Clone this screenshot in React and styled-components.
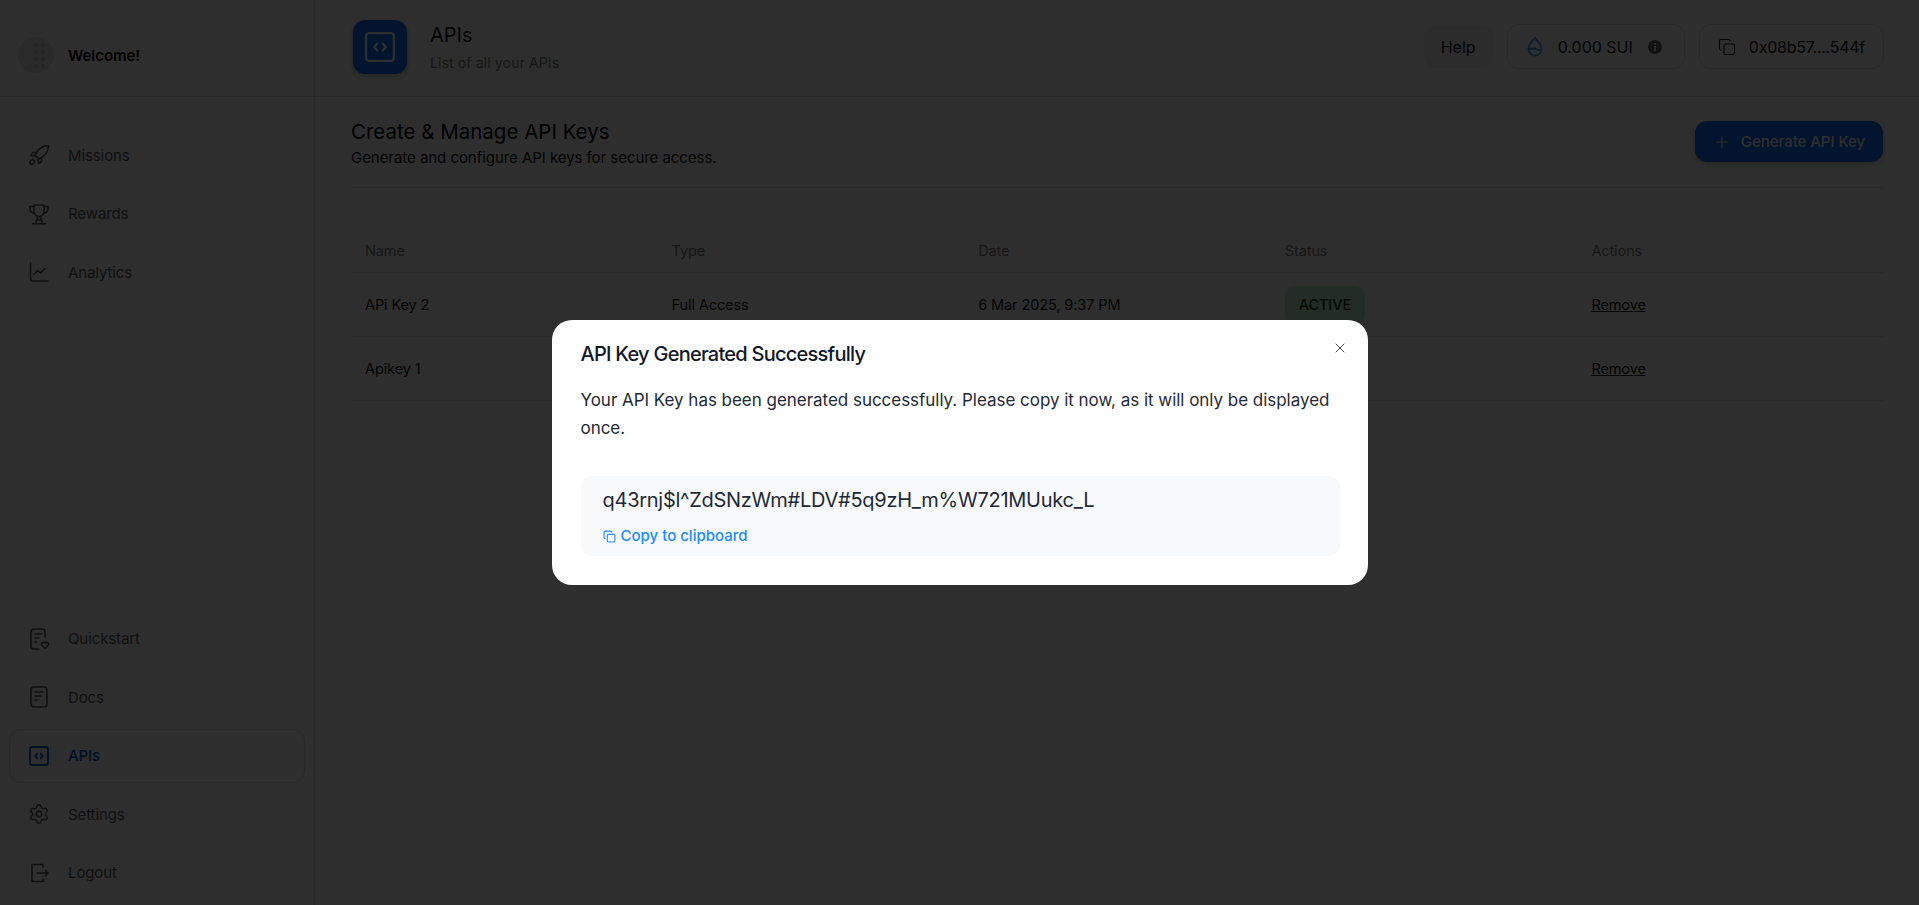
import styled, { createGlobalStyle } from 'styled-components';
import { Settings, Plus, Copy, X } from 'lucide-react';

const GlobalStyle = createGlobalStyle`
  * { box-sizing: border-box; }
  html, body { margin: 0; height: 100%; }
  body {
    background: #fff;
    color: #1a1a1a;
    font-family: Inter, "Noto Sans", "Liberation Sans", sans-serif;
    overflow: hidden;
  }
`;

const Shell = styled.div`
  display: flex;
  height: 905px;
`;

const Sidebar = styled.aside`
  width: 315px;
  flex-shrink: 0;
  display: flex;
  flex-direction: column;
  border-right: 1px solid #dcdcdc;
`;

const Brand = styled.div`
  height: 97px;
  padding: 14px 18px 0;
  display: flex;
  align-items: center;
  gap: 14px;
  border-bottom: 1px solid #dcdcdc;
  font-size: 15px;
  font-weight: 600;
  color: #000;
  letter-spacing: -0.05px;
`;

const Nav = styled.nav`
  flex: 1;
  display: flex;
  flex-direction: column;
  justify-content: space-between;
  padding: 31px 9px 5px;
`;

const NavGroup = styled.div`
  display: flex;
  flex-direction: column;
  gap: 4px;
`;

const NavItem = styled.a`
  height: 54.5px;
  padding: 0 18px;
  display: flex;
  align-items: center;
  gap: 18px;
  font-size: 15px;
  letter-spacing: -0.1px;
  border-radius: 12px;
  border: 1px solid ${({ $active }) => ($active ? '#dcdcdc' : 'transparent')};
  color: ${({ $active }) => ($active ? '#0052cc' : '#5a5a5a')};
  font-weight: ${({ $active }) => ($active ? 500 : 400)};
  svg { flex-shrink: 0; width: 22px; height: 22px; }
`;

const Main = styled.main`
  flex: 1;
  min-width: 0;
  display: flex;
  flex-direction: column;
`;

const TopBar = styled.header`
  height: 97px;
  padding: 0 35px 3px 38px;
  display: flex;
  align-items: center;
  border-bottom: 1px solid #dcdcdc;
`;

const PageIcon = styled.div`
  width: 54px;
  height: 54px;
  border-radius: 12px;
  background: #0d6efd;
  box-shadow: 0 2px 6px rgba(0, 0, 0, 0.25);
  color: #fff;
  display: grid;
  place-items: center;
  margin-right: 23px;
`;

const PageTitle = styled.div`
  flex: 1;
  margin-top: 3px;
  h1 {
    margin: 0 0 6px;
    font-size: 20px;
    line-height: 24px;
    font-weight: 400;
    color: #1a1a1a;
  }
  p {
    margin: 0;
    font-size: 14.3px;
    line-height: 20px;
    color: #808080;
  }
`;

const TopActions = styled.div`
  display: flex;
  align-items: center;
  gap: 14px;
`;

const HelpButton = styled.button`
  height: 42px;
  width: 69px;
  border: 0;
  border-radius: 12px;
  background: #f2f2f2;
  font: inherit;
  font-size: 16px;
  color: #1a1a1a;
`;

const Chip = styled.div`
  height: 45px;
  padding: 0 22px 0 19px;
  border: 1px solid #dcdcdc;
  border-radius: 12px;
  display: flex;
  align-items: center;
  gap: 15px;
  font-size: 16px;
  color: #1a1a1a;
`;

const WalletChip = styled(Chip)`
  padding: 0 18px;
  gap: 13px;
  letter-spacing: -0.25px;
`;

const Content = styled.section`
  padding: 23px 35px 0 36px;
`;

const SectionHead = styled.div`
  height: 68px;
  display: flex;
  justify-content: space-between;
  align-items: flex-start;
  border-bottom: 1px solid #e0e0e0;
  h2 {
    margin: 0;
    font-size: 20.5px;
    line-height: 24px;
    font-weight: 400;
    color: #000;
  }
  p {
    margin: 3px 0 0;
    font-size: 15px;
    line-height: 22px;
    letter-spacing: -0.05px;
    color: #111;
  }
`;

const PrimaryButton = styled.button`
  width: 188px;
  height: 41px;
  margin: 1px 1px 0 0;
  border: 0;
  border-radius: 12px;
  background: #0d6efd;
  box-shadow: 0 2px 6px rgba(0, 0, 0, 0.2);
  color: #fff;
  font: inherit;
  font-size: 15px;
  font-weight: 500;
  letter-spacing: -0.05px;
  display: flex;
  align-items: center;
  justify-content: center;
  gap: 10px;
`;

const Table = styled.div`
  margin-top: 40px;
`;

const Row = styled.div`
  display: grid;
  grid-template-columns: repeat(5, 1fr);
  align-items: center;
  height: ${({ $head }) => ($head ? '45px' : '64px')};
  border-bottom: 1px solid #e0e0e0;
  font-size: 14.5px;
  color: ${({ $head }) => ($head ? '#808080' : '#1a1a1a')};
  letter-spacing: -0.1px;
`;

const Cell = styled.span`
  padding-left: 14px;
`;

const Badge = styled.span`
  justify-self: start;
  margin-left: 14px;
  padding: 0 14px;
  height: 38px;
  display: flex;
  align-items: center;
  border-radius: 10px;
  background: #c9f0d2;
  color: #063d16;
  font-weight: 500;
`;

const RemoveLink = styled.a`
  text-decoration: underline;
  color: #111;
`;

const Overlay = styled.div`
  position: fixed;
  inset: 0;
  background: rgba(0, 0, 0, 0.82);
  display: flex;
  align-items: center;
  justify-content: center;
`;

const Modal = styled.div`
  position: relative;
  width: 816px;
  height: 265px;
  padding: 22px 28px 0 29px;
  background: #fff;
  border-radius: 20px;
  color: #1f2937;
`;

const ModalTitle = styled.h3`
  margin: 0;
  font-size: 20px;
  line-height: 24px;
  font-weight: 500;
  letter-spacing: -0.75px;
  color: #111827;
`;

const ModalText = styled.p`
  margin: 20px 0 35px;
  font-size: 17px;
  line-height: 28px;
  letter-spacing: -0.03px;
`;

const CloseButton = styled.button`
  position: absolute;
  top: 20px;
  right: 20px;
  padding: 0;
  border: 0;
  background: none;
  color: #374151;
  display: flex;
`;

const KeyBox = styled.div`
  height: 80px;
  margin-top: -1px;
  padding: 12px 22px;
  border-radius: 10px;
  background: #f8f9fb;
`;

const KeyText = styled.div`
  font-size: 20px;
  line-height: 24px;
  letter-spacing: -0.27px;
  color: #1f2937;
`;

const CopyLink = styled.a`
  margin-top: 14px;
  display: flex;
  align-items: center;
  gap: 5px;
  font-size: 15px;
  line-height: 20px;
  font-weight: 500;
  color: #1a8cff;
`;

const Line = ({ children }) => (
  <svg viewBox="0 0 22 22" fill="none" stroke="currentColor" strokeWidth="1.6" strokeLinecap="round" strokeLinejoin="round">
    {children}
  </svg>
);

const RocketIcon = () => (
  <Line>
    <path d="M20.500 1.500C14 1.800 9.500 5 7 11l4 4c6-2.500 9.200-7 9.500-13.500z" />
    <path d="M8 8.500H4.500L3 11.500l4 .5M13.500 14v3.500L10.500 19.500 10 15.500" />
    <ellipse cx="4.200" cy="18" rx="1.800" ry="2.600" transform="rotate(40 4.200 18)" />
  </Line>
);

const TrophyIcon = () => (
  <Line>
    <path d="M6 2h10v6.500a5 5 0 0 1-10 0z" />
    <path d="M6 3.500H2v2.500a4 4 0 0 0 4.500 4M16 3.500h4v2.500a4 4 0 0 1-4.500 4" />
    <path d="M9.800 13.500L7.500 20.500M12.200 13.500l2.300 7M8.500 17h5M4.500 20.800h13" />
  </Line>
);

const ChartIcon = () => (
  <Line>
    <path d="M2.500 2v15.500a2.500 2.500 0 0 0 2.500 2.500h15" />
    <path d="M6 13.500l3.500-4 3.200 2.500 4.300-4.500" />
  </Line>
);

const QuickstartIcon = () => (
  <Line>
    <path d="M17 9V4a3 3 0 0 0-3-3H6a3 3 0 0 0-3 3v14a3 3 0 0 0 3 3h5" />
    <path d="M7 6h6.500M7 10h4M7 14h1.500" />
    <path d="M17 20.500l-3.200-3.200a1.900 1.900 0 0 1 3.200-2.200a1.900 1.900 0 0 1 3.200 2.200z" />
  </Line>
);

const DocsIcon = () => (
  <Line>
    <rect x="3" y="1" width="16" height="20" rx="3" />
    <path d="M7 6h8M7 10h6M7 14h2" />
  </Line>
);

const CodeIcon = ({ size = 22, weight = 1.8 }) => (
  <svg viewBox="0 0 22 22" width={size} height={size} fill="none" stroke="currentColor" strokeWidth={weight} strokeLinecap="round" strokeLinejoin="round">
    <rect x="2" y="2" width="18" height="18" rx="2" />
    <path d="M9.200 8.800L7.300 11l1.900 2.200M12.800 8.800l1.900 2.200-1.900 2.200" />
  </svg>
);

const LogoutIcon = () => (
  <Line>
    <path d="M15 5V2.500H4v17h11V17" />
    <path d="M9 11h11M17.200 8.200L20 11l-2.800 2.800" />
  </Line>
);

const navTop = [
  { label: 'Missions', icon: <RocketIcon /> },
  { label: 'Rewards', icon: <TrophyIcon /> },
  { label: 'Analytics', icon: <ChartIcon /> },
];

const navBottom = [
  { label: 'Quickstart', icon: <QuickstartIcon /> },
  { label: 'Docs', icon: <DocsIcon /> },
  { label: 'APIs', icon: <CodeIcon />, active: true },
  { label: 'Settings', icon: <Settings strokeWidth={1.6} /> },
  { label: 'Logout', icon: <LogoutIcon /> },
];

const keys = [
  { name: 'APi Key 2', type: 'Full Access', date: '6 Mar 2025, 9:37 PM' },
  { name: 'Apikey 1', type: 'Full Access', date: '6 Mar 2025, 9:30 PM' },
];

const dots = [0, 1, 2, 3].flatMap((r) => [0, 1].map((c) => [c, r]));

export default function App() {
  return (
    <>
      <GlobalStyle />
      <Shell>
        <Sidebar>
          <Brand>
            <svg width="36" height="36" viewBox="0 0 36 36">
              <circle cx="18" cy="18" r="18" fill="#e6e6e6" />
              {dots.map(([c, r]) => (
                <rect key={`${c}-${r}`} x={16 + c * 7} y={6 + r * 7} width="4" height="4" rx="1" fill="#d2d2d2" />
              ))}
            </svg>
            Welcome!
          </Brand>
          <Nav>
            <NavGroup>
              {navTop.map((item) => (
                <NavItem key={item.label}>{item.icon}{item.label}</NavItem>
              ))}
            </NavGroup>
            <NavGroup>
              {navBottom.map((item) => (
                <NavItem key={item.label} $active={item.active}>{item.icon}{item.label}</NavItem>
              ))}
            </NavGroup>
          </Nav>
        </Sidebar>
        <Main>
          <TopBar>
            <PageIcon><CodeIcon size={34} weight={1.5} /></PageIcon>
            <PageTitle>
              <h1>APIs</h1>
              <p>List of all your APIs</p>
            </PageTitle>
            <TopActions>
              <HelpButton>Help</HelpButton>
              <Chip>
                <svg width="16" height="22" viewBox="0 0 16 22" fill="none" stroke="#4da2ff" strokeWidth="1.8">
                  <path d="M8 2c3 3.500 6.500 6.500 6.500 11a6.500 6.500 0 0 1-13 0C1.500 8.500 5 5.500 8 2z" />
                  <path d="M1.800 12c3 3 4.500-1.500 8 1.500c1.500 1.200 3 1 4.500 0" />
                </svg>
                0.000 SUI
                <svg width="14" height="14" viewBox="0 0 14 14">
                  <circle cx="7" cy="7" r="7" fill="#666" />
                  <rect x="6" y="6" width="2" height="5" fill="#fff" />
                  <rect x="6" y="3" width="2" height="2" fill="#fff" />
                </svg>
              </Chip>
              <WalletChip>
                <Copy size={18} strokeWidth={1.6} />
                0x08b57....544f
              </WalletChip>
            </TopActions>
          </TopBar>
          <Content>
            <SectionHead>
              <div>
                <h2>Create &amp; Manage API Keys</h2>
                <p>Generate and configure API keys for secure access.</p>
              </div>
              <PrimaryButton><Plus size={18} strokeWidth={1.6} />Generate API Key</PrimaryButton>
            </SectionHead>
            <Table>
              <Row $head>
                <Cell>Name</Cell><Cell>Type</Cell><Cell>Date</Cell><Cell>Status</Cell><Cell>Actions</Cell>
              </Row>
              {keys.map((k) => (
                <Row key={k.name}>
                  <Cell>{k.name}</Cell>
                  <Cell>{k.type}</Cell>
                  <Cell>{k.date}</Cell>
                  <Badge>ACTIVE</Badge>
                  <Cell><RemoveLink>Remove</RemoveLink></Cell>
                </Row>
              ))}
            </Table>
          </Content>
        </Main>
      </Shell>
      <Overlay>
        <Modal>
          <CloseButton><X size={16} strokeWidth={1.5} /></CloseButton>
          <ModalTitle>API Key Generated Successfully</ModalTitle>
          <ModalText>Your API Key has been generated successfully. Please copy it now, as it will only be displayed once.</ModalText>
          <KeyBox>
            <KeyText>q43rnj$l^ZdSNzWm#LDV#5q9zH_m%W721MUukc_L</KeyText>
            <CopyLink><Copy size={13} />Copy to clipboard</CopyLink>
          </KeyBox>
        </Modal>
      </Overlay>
    </>
  );
}
